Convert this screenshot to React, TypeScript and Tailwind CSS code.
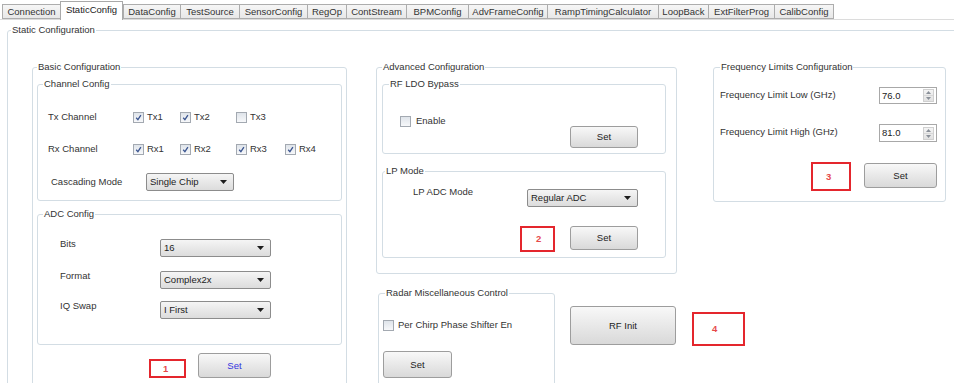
import React from "react";

type GP = { title: string; cls: string; lg: string; children?: React.ReactNode };

function Group({ title, cls, lg, children }: GP) {
  return (
    <div className={"relative shrink-0 border border-[#d3dde4] rounded-[3px] " + cls}>
      <span className={"absolute -top-[7px] bg-white px-[1px] leading-[12px] text-[#333] whitespace-nowrap " + lg}>{title}</span>
      {children}
    </div>
  );
}

function Check({ checked }: { checked?: boolean }) {
  return (
    <span className="w-[11px] h-[11px] shrink-0 border border-[#a3a9b1] bg-linear-to-b from-[#dfe4ea] to-[#f7f8fa] flex items-center justify-center">
      {checked && (
        <svg width="7" height="7" viewBox="0 0 7 7">
          <path d="M1.2 3.8 L2.9 5.6 L5.9 1.2" stroke="#3b5590" strokeWidth="1.3" fill="none" />
        </svg>
      )}
    </span>
  );
}

function CB({ label, checked, cls }: { label: string; checked?: boolean; cls: string }) {
  return (
    <div className={"flex items-center gap-[3px] " + cls}>
      <Check checked={checked} />
      <span>{label}</span>
    </div>
  );
}

function Select({ value, cls }: { value: string; cls: string }) {
  return (
    <div className={"flex items-center justify-between shrink-0 border border-[#8c8c8c] rounded-[2px] bg-linear-to-b from-[#f5f5f5] to-[#dcdcdc] pl-[3px] pr-[6px] text-[#222] " + cls}>
      <span>{value}</span>
      <svg width="7" height="4" viewBox="0 0 7 4">
        <path d="M0 0 H7 L3.5 4 Z" fill="#1e1e1e" />
      </svg>
    </div>
  );
}

function Btn({ label, cls }: { label: string; cls: string }) {
  return (
    <div className={"flex items-center justify-center shrink-0 border border-[#9d9d9d] rounded-[3px] bg-linear-to-b from-[#f8f8f8] to-[#d9d9d9] " + cls}>
      {label}
    </div>
  );
}

function Red({ n, cls }: { n: string; cls: string }) {
  return (
    <div className={"flex items-center shrink-0 border-2 border-[#e4262d] text-[#e64a4a] font-bold " + cls}>{n}</div>
  );
}

function Spin({ value, cls }: { value: string; cls: string }) {
  return (
    <div className={"flex items-center shrink-0 border border-[#a8a8a8] bg-white w-[58px] " + cls}>
      <span className="flex-1 pl-[2px] text-[#222]">{value}</span>
      <div className="flex flex-col w-[11px] h-[13px] mr-[2px] border border-[#d0d0d0] bg-linear-to-b from-[#f4f4f4] to-[#e2e2e2]">
        <div className="flex-1 flex items-center justify-center border-b border-[#d8d8d8]">
          <svg width="5" height="3" viewBox="0 0 5 3"><path d="M0 3 H5 L2.5 0 Z" fill="#8a9099" /></svg>
        </div>
        <div className="flex-1 flex items-center justify-center">
          <svg width="5" height="3" viewBox="0 0 5 3"><path d="M0 0 H5 L2.5 3 Z" fill="#8a9099" /></svg>
        </div>
      </div>
    </div>
  );
}

const tabs: { t: string; w: string; sel?: boolean }[] = [
  { t: "Connection", w: "w-[58px]" },
  { t: "StaticConfig", w: "w-[63px]", sel: true },
  { t: "DataConfig", w: "w-[57px]" },
  { t: "TestSource", w: "w-[59px]" },
  { t: "SensorConfig", w: "w-[68px]" },
  { t: "RegOp", w: "w-[39px]" },
  { t: "ContStream", w: "w-[60px]" },
  { t: "BPMConfig", w: "w-[62px]" },
  { t: "AdvFrameConfig", w: "w-[79px]" },
  { t: "RampTimingCalculator", w: "w-[111px]" },
  { t: "LoopBack", w: "w-[50px]" },
  { t: "ExtFilterProg", w: "w-[66px]" },
  { t: "CalibConfig", w: "w-[60px]" },
];

function TabBar() {
  return (
    <div className="flex items-start h-[20px] pl-[2px] pt-[1px] border-b border-[#dcdcdc]">
      {tabs.map((tb, i) =>
        tb.sel ? (
          <div
            key={tb.t}
            className={"relative z-10 h-[19px] -mb-px flex items-start justify-center pt-[2px] bg-white border border-b-0 border-[#a9a9a9] text-[#222] " + tb.w}
          >
            {tb.t}
          </div>
        ) : (
          <div
            key={tb.t}
            className={
              "mt-[3px] h-[15px] flex items-center justify-center bg-linear-to-b from-[#f6f6f6] to-[#e8e8e8] border-y border-l border-[#adadad] text-[#333] " +
              tb.w +
              (i === tabs.length - 1 ? " border-r" : "")
            }
          >
            {tb.t}
          </div>
        )
      )}
    </div>
  );
}

export default function App() {
  return (
    <div className="w-[954px] h-[383px] overflow-hidden bg-white text-[9.5px] leading-[12px] text-[#333] font-['Liberation_Sans',Arial,sans-serif]">
      <TabBar />
      <div className="mt-[10px] ml-[7px]">
        <Group title="Static Configuration" cls="w-[960px] h-[400px]" lg="left-[3px]">
          <div className="flex items-start pl-[24px] pt-[36px]">
            {/* Left column */}
            <Group title="Basic Configuration" cls="w-[315px] h-[330px]" lg="left-[4px]">
              <div className="flex flex-col pl-[4px] pt-[16px]">
                <Group title="Channel Config" cls="w-[305px] h-[117px]" lg="left-[5px]">
                  <div className="flex flex-col pt-[24px]">
                    <div className="flex items-center h-[16px] pl-[10px]">
                      <span className="w-[85px]">Tx Channel</span>
                      <CB label="Tx1" checked cls="w-[47px]" />
                      <CB label="Tx2" checked cls="w-[56px]" />
                      <CB label="Tx3" cls="w-[49px]" />
                    </div>
                    <div className="flex items-center h-[16px] pl-[10px] mt-[16px]">
                      <span className="w-[85px]">Rx Channel</span>
                      <CB label="Rx1" checked cls="w-[47px]" />
                      <CB label="Rx2" checked cls="w-[56px]" />
                      <CB label="Rx3" checked cls="w-[49px]" />
                      <CB label="Rx4" checked cls="w-[40px]" />
                    </div>
                    <div className="flex items-center h-[18px] pl-[13px] mt-[16px]">
                      <span className="w-[95px]">Cascading Mode</span>
                      <Select value="Single Chip" cls="w-[88px] h-[18px]" />
                    </div>
                  </div>
                </Group>
                <Group title="ADC Config" cls="w-[305px] h-[131px] mt-[13px]" lg="left-[5px]">
                  <div className="flex flex-col pt-[24px] pl-[22px]">
                    <div className="flex items-start h-[18px]">
                      <span className="w-[100px] -mt-[1px]">Bits</span>
                      <Select value="16" cls="w-[111px] h-[18px]" />
                    </div>
                    <div className="flex items-start h-[18px] mt-[14px]">
                      <span className="w-[100px] -mt-[1px]">Format</span>
                      <Select value="Complex2x" cls="w-[111px] h-[18px]" />
                    </div>
                    <div className="flex items-start h-[18px] mt-[12px]">
                      <span className="w-[100px] -mt-[1px]">IQ Swap</span>
                      <Select value="I First" cls="w-[111px] h-[18px]" />
                    </div>
                  </div>
                </Group>
                <div className="flex items-start mt-[8px]">
                  <Red n="1" cls="ml-[112px] mt-[6px] w-[37px] h-[19px] pl-[12px]" />
                  <Btn label="Set" cls="ml-[12px] w-[73px] h-[25px] text-[#3434e0]" />
                </div>
              </div>
            </Group>

            {/* Right area */}
            <div className="flex flex-col ml-[29px]">
              <div className="flex items-start">
                <Group title="Advanced Configuration" cls="w-[301px] h-[207px]" lg="left-[5px]">
                  <div className="flex flex-col pl-[5px] pt-[16px]">
                    <Group title="RF LDO Bypass" cls="w-[284px] h-[70px]" lg="left-[6px]">
                      <div className="flex justify-between">
                        <CB label="Enable" cls="ml-[17px] mt-[29px] h-[14px] gap-[5px]" />
                        <Btn label="Set" cls="mt-[41px] mr-[27px] w-[68px] h-[22px] text-[#222]" />
                      </div>
                    </Group>
                    <Group title="LP Mode" cls="w-[284px] h-[87px] mt-[17px]" lg="left-[2px]">
                      <div className="flex flex-col pl-[30px] pt-[14px]">
                        <div className="flex items-start">
                          <span className="w-[114px]">LP ADC Mode</span>
                          <Select value="Regular ADC" cls="mt-[3px] w-[111px] h-[18px]" />
                        </div>
                        <div className="flex items-start mt-[19px]">
                          <Red n="2" cls="ml-[107px] w-[35px] h-[26px] pl-[14px]" />
                          <Btn label="Set" cls="ml-[15px] w-[68px] h-[24px] text-[#222]" />
                        </div>
                      </div>
                    </Group>
                  </div>
                </Group>
                <Group title="Frequency Limits Configuration" cls="ml-[36px] w-[233px] h-[135px]" lg="left-[6px]">
                  <div className="flex flex-col pt-[19px] pl-[6px] pr-[8px]">
                    <div className="flex items-center justify-between h-[17px]">
                      <span className="-mt-[2px]">Frequency Limit Low (GHz)</span>
                      <Spin value="76.0" cls="h-[17px]" />
                    </div>
                    <div className="flex items-center justify-between h-[18px] mt-[20px]">
                      <span className="-mt-[2px]">Frequency Limit High (GHz)</span>
                      <Spin value="81.0" cls="h-[18px]" />
                    </div>
                    <div className="flex items-start justify-end mt-[20px]">
                      <Red n="3" cls="w-[40px] h-[29px] pl-[13px]" />
                      <Btn label="Set" cls="ml-[13px] mt-[1px] w-[73px] h-[25px] text-[#222]" />
                    </div>
                  </div>
                </Group>
              </div>
              <div className="flex items-start mt-[19px]">
                <Group title="Radar Miscellaneous Control" cls="ml-[2px] w-[177px] h-[120px]" lg="left-[6px]">
                  <div className="flex flex-col pl-[4px] pt-[24px]">
                    <CB label="Per Chirp Phase Shifter En" cls="h-[14px] gap-[4px]" />
                    <Btn label="Set" cls="mt-[19px] w-[69px] h-[27px] text-[#222]" />
                  </div>
                </Group>
                <Btn label="RF Init" cls="ml-[15px] mt-[13px] w-[106px] h-[39px] text-[#222]" />
                <Red n="4" cls="ml-[16px] mt-[19px] w-[53px] h-[34px] pl-[18px]" />
              </div>
            </div>
          </div>
        </Group>
      </div>
    </div>
  );
}
